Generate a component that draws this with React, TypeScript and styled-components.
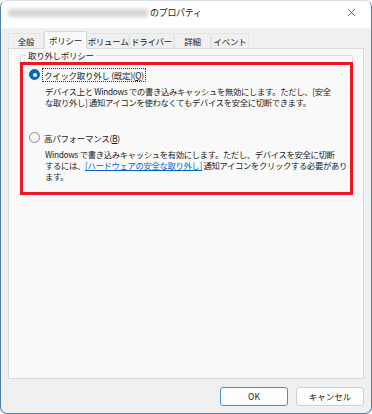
import { createGlobalStyle } from "styled-components";
import styled from "styled-components";
import { X } from "lucide-react";

const GlobalStyle = createGlobalStyle`
  html, body {
    margin: 0;
    padding: 0;
    background: #ffffff;
  }
  body {
    font-family: "Noto Sans CJK JP", "Noto Sans", sans-serif;
    color: #1a1a1a;
  }
`;

const Window = styled.div`
  width: 372px;
  height: 414px;
  box-sizing: border-box;
  display: flex;
  flex-direction: column;
  border: 1px solid #4f7ea6;
  border-top-color: #d6dfe8;
  border-radius: 7px;
  background: #f0f0f0;
  overflow: hidden;
`;

const TitleBar = styled.div`
  height: 27px;
  display: flex;
  align-items: center;
  padding: 0 7px 4px;
  box-sizing: border-box;
  background: #ffffff;
  font-size: 9px;
  line-height: 10px;
`;

const BlurredName = styled.span`
  width: 140px;
  height: 8px;
  margin-right: 2px;
  border-radius: 3px;
  background: #d2d2d2;
  filter: blur(2px);
`;

const Title = styled.span`
  flex: 1;
  letter-spacing: -0.3px;
`;

const CloseButton = styled.div`
  width: 24px;
  display: flex;
  justify-content: center;
  color: #222;
  margin-right: 1px;
`;

const Body = styled.div`
  flex: 1;
  display: flex;
  flex-direction: column;
  padding: 2px 7px 0;
`;

const TabRow = styled.div`
  display: flex;
  align-items: flex-end;
  height: 18px;
  position: relative;
  z-index: 1;
`;

const Tab = styled.div<{ $active?: boolean; $w: number }>`
  width: ${(p) => p.$w}px;
  height: ${(p) => (p.$active ? 18 : 15)}px;
  box-sizing: border-box;
  display: flex;
  align-items: center;
  justify-content: center;
  white-space: nowrap;
  font-size: 8.5px;
  background: ${(p) => (p.$active ? "#f9f9f9" : "#f0f0f0")};
  border: 1px solid ${(p) => (p.$active ? "#d9d9d9" : "#e4e4e4")};
  border-bottom: ${(p) => (p.$active ? "1px solid #f9f9f9" : "none")};
  margin-bottom: ${(p) => (p.$active ? -1 : 0)}px;
  border-radius: 2px 2px 0 0;
  letter-spacing: -0.3px;
`;

const Panel = styled.div`
  flex: 1;
  background: #f9f9f9;
  border: 1px solid #d9d9d9;
  padding: 1px 10px 0 11px;
`;

const Group = styled.fieldset`
  margin: 0;
  padding: 0;
  border: 1px solid #dcdcdc;
  border-radius: 2px;
  min-width: 0;
`;

const GroupLegend = styled.legend`
  font-size: 8.5px;
  margin-left: 5px;
  padding: 0 2px;
  line-height: 10px;
  letter-spacing: -0.3px;
`;

const Highlight = styled.div`
  margin: 2px -1px -1px;
  border: 3px solid #ea1820;
  padding: 3px 10px 10px 6px;
  display: flex;
  flex-direction: column;
`;

const Option = styled.div<{ $gap?: number }>`
  margin-top: ${(p) => p.$gap ?? 0}px;
`;

const OptionRow = styled.div`
  display: flex;
  align-items: center;
  height: 13px;
  font-size: 8.5px;
  letter-spacing: -0.3px;
  white-space: nowrap;
`;

const Radio = styled.span<{ $checked?: boolean }>`
  width: 11px;
  height: 11px;
  box-sizing: border-box;
  border-radius: 50%;
  margin-right: 3px;
  display: flex;
  align-items: center;
  justify-content: center;
  background: ${(p) => (p.$checked ? "#0067c0" : "#f6f6f6")};
  border: 1px solid ${(p) => (p.$checked ? "#0067c0" : "#8a8a8a")};
  &::after {
    content: "";
    display: ${(p) => (p.$checked ? "block" : "none")};
    width: 4px;
    height: 4px;
    border-radius: 50%;
    background: #ffffff;
  }
`;

const OptionLabel = styled.span<{ $focused?: boolean }>`
  padding: 0 1px;
  outline: ${(p) => (p.$focused ? "1px dotted #333" : "none")};
  line-height: 12px;
`;

const Mnemonic = styled.span`
  text-decoration: underline;
`;

const Description = styled.p`
  margin: 5px 0 0 16px;
  font-size: 8.3px;
  line-height: 11px;
  letter-spacing: -0.3px;
  white-space: nowrap;
  color: #1a1a1a;
`;

const Link = styled.span`
  color: #0066cc;
  text-decoration: underline;
`;

const Footer = styled.div`
  height: 34px;
  display: flex;
  align-items: center;
  justify-content: flex-end;
  gap: 8px;
`;

const Button = styled.button<{ $primary?: boolean }>`
  width: 68px;
  height: 19px;
  padding: 0;
  font-family: inherit;
  font-size: 8.5px;
  color: #1a1a1a;
  background: #fdfdfd;
  border: 1px solid ${(p) => (p.$primary ? "#4a8fd0" : "#d0d0d0")};
  border-radius: 3px;
`;

export default function App() {
  return (
    <>
      <GlobalStyle />
      <Window>
        <TitleBar>
          <BlurredName />
          <Title>のプロパティ</Title>
          <CloseButton>
            <X size={13} strokeWidth={1.2} />
          </CloseButton>
        </TitleBar>
        <Body>
          <TabRow>
            <Tab $w={36}>全般</Tab>
            <Tab $w={43} $active>
              ポリシー
            </Tab>
            <Tab $w={42}>ボリューム</Tab>
            <Tab $w={45}>ドライバー</Tab>
            <Tab $w={37}>詳細</Tab>
            <Tab $w={38}>イベント</Tab>
          </TabRow>
          <Panel>
            <Group>
              <GroupLegend>取り外しポリシー</GroupLegend>
              <Highlight>
                <Option>
                  <OptionRow>
                    <Radio $checked />
                    <OptionLabel $focused>
                      クイック取り外し (既定)(<Mnemonic>Q</Mnemonic>)
                    </OptionLabel>
                  </OptionRow>
                  <Description>
                    デバイス上と Windows での書き込みキャッシュを無効にします。ただし、[安全
                    <br />
                    な取り外し] 通知アイコンを使わなくてもデバイスを安全に切断できます。
                  </Description>
                </Option>
                <Option $gap={23}>
                  <OptionRow>
                    <Radio />
                    <OptionLabel>
                      高パフォーマンス(<Mnemonic>B</Mnemonic>)
                    </OptionLabel>
                  </OptionRow>
                  <Description>
                    Windows で書き込みキャッシュを有効にします。ただし、デバイスを安全に切断
                    <br />
                    するには、<Link>[ハードウェアの安全な取り外し]</Link> 通知アイコンをクリックする必要があり
                    <br />
                    ます。
                  </Description>
                </Option>
              </Highlight>
            </Group>
          </Panel>
          <Footer>
            <Button $primary>OK</Button>
            <Button>キャンセル</Button>
          </Footer>
        </Body>
      </Window>
    </>
  );
}
